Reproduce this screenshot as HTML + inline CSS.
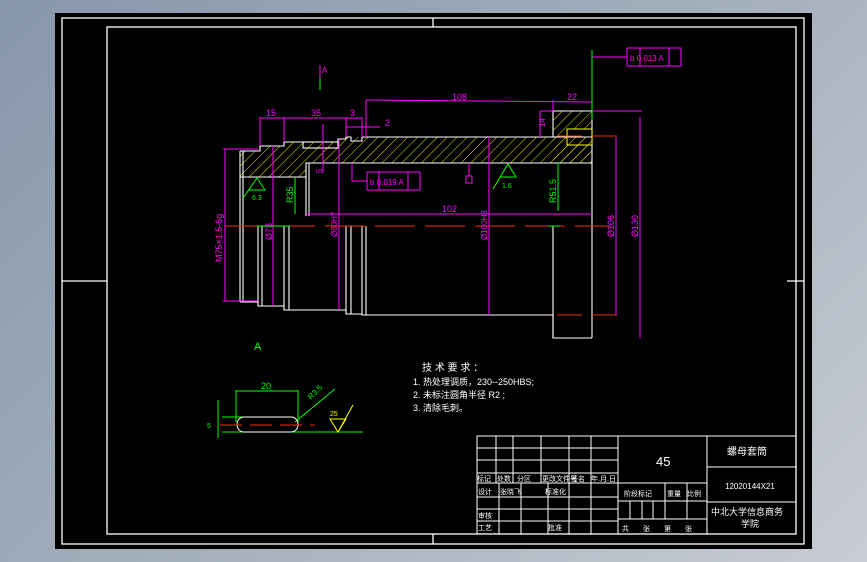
<!DOCTYPE html>
<html><head><meta charset="utf-8"><style>
html,body{margin:0;padding:0;width:867px;height:562px;overflow:hidden;background:linear-gradient(135deg,#8797aa 0%,#a3aebc 50%,#c8ccd4 100%);}
svg{position:absolute;left:0;top:0}
text{font-family:"Liberation Sans","Noto Sans CJK SC",sans-serif}
</style></head><body>
<svg width="867" height="562" viewBox="0 0 867 562" xmlns="http://www.w3.org/2000/svg">
<defs>
<pattern id="h" width="7" height="7" patternUnits="userSpaceOnUse" patternTransform="rotate(45)">
<line x1="0" y1="0" x2="0" y2="7" stroke="#e8e800" stroke-width="1"/>
</pattern>
</defs>
<rect x="55" y="13" width="757" height="536" fill="#000"/>
<g fill="none" stroke="#fff" stroke-width="1.3">
<rect x="62" y="18" width="742" height="526"/>
<rect x="107" y="27" width="689" height="507"/>
<line x1="62" y1="281" x2="107" y2="281"/><line x1="787" y1="281" x2="804" y2="281"/>
<line x1="433" y1="18" x2="433" y2="27"/><line x1="433" y1="534" x2="433" y2="544"/>
</g>
<!-- hatched upper section -->
<path d="M240 151 H260 V146 H284 V142 H338 V139 H346 V137 H592 V163 H306 V177 H240 Z" fill="url(#h)"/>
<path d="M553 111 H592 V129 H567 V145 H592 V163 H553 Z" fill="url(#h)"/>
<g fill="none" stroke="#fff" stroke-width="1.1">
<path d="M240 151 H260 V146 H284 V142 H338 V139 H346 V137 H351 V141 H362 V137 H592"/>
<rect x="303" y="142" width="35" height="6"/>
<path d="M553 111 H592 V338"/>
<line x1="553" y1="111" x2="553" y2="137"/>
<line x1="240" y1="177" x2="306" y2="177"/>
<path d="M306 177 V163 H592"/>
<line x1="240" y1="151" x2="240" y2="302"/>
<line x1="243" y1="151" x2="243" y2="302"/>
<path d="M240 302 H258 V306 H284 V310 H346 V314 H362 V315 H553 V338 H592"/>
<line x1="258" y1="226" x2="258" y2="306"/><line x1="262" y1="226" x2="262" y2="306"/>
<line x1="284" y1="226" x2="284" y2="310"/><line x1="289" y1="226" x2="289" y2="310"/>
<line x1="306" y1="177" x2="306" y2="216"/><line x1="309" y1="163" x2="309" y2="216"/>
<line x1="346" y1="226" x2="346" y2="314"/><line x1="351" y1="226" x2="351" y2="314"/>
<line x1="362" y1="226" x2="362" y2="315"/><line x1="366" y1="226" x2="366" y2="315"/>
<line x1="553" y1="226" x2="553" y2="338"/>
</g>
<rect x="567" y="129" width="25" height="16" fill="none" stroke="#ff0" stroke-width="1"/>
<!-- centerlines -->
<g stroke="#f03000" stroke-width="1" stroke-dasharray="40,10">
<line x1="225" y1="226" x2="610" y2="226"/>
</g>
<line x1="557" y1="136" x2="620" y2="136" stroke="#f03000" stroke-dasharray="25,10"/>
<line x1="557" y1="315" x2="620" y2="315" stroke="#f03000" stroke-dasharray="25,10"/>
<!-- dimensions magenta -->
<g stroke="#f0f" stroke-width="1" fill="none">
<line x1="260" y1="118" x2="362" y2="118"/>
<line x1="260" y1="117" x2="260" y2="146"/><line x1="284" y1="117" x2="284" y2="142"/>
<line x1="346" y1="117" x2="346" y2="137"/><line x1="362" y1="117" x2="362" y2="137"/>
<line x1="346" y1="127" x2="380" y2="127"/>
<line x1="366" y1="100" x2="592" y2="102"/><line x1="366" y1="100" x2="366" y2="137"/>
<line x1="553" y1="100" x2="553" y2="111"/>
<line x1="540" y1="111" x2="553" y2="111"/><line x1="540" y1="111" x2="540" y2="137"/>
<line x1="223" y1="149" x2="258" y2="149"/><line x1="225" y1="149" x2="225" y2="301"/><line x1="223" y1="301" x2="258" y2="301"/>
<line x1="273" y1="146" x2="273" y2="306"/>
<line x1="339" y1="139" x2="339" y2="310"/>
<line x1="323" y1="124" x2="323" y2="173"/>
<line x1="489" y1="137" x2="489" y2="315"/>
<line x1="306" y1="214" x2="592" y2="214"/>
<line x1="616" y1="137" x2="616" y2="315"/>
<line x1="592" y1="111" x2="642" y2="111"/><line x1="640" y1="117" x2="640" y2="338"/>
<line x1="592" y1="57" x2="627" y2="57"/>
<rect x="627" y="48" width="54" height="18"/><line x1="640" y1="48" x2="640" y2="66"/><line x1="669" y1="48" x2="669" y2="66"/>
<path d="M352 163 V181 H367"/>
<rect x="367" y="172" width="53" height="18"/><line x1="379" y1="172" x2="379" y2="190"/><line x1="408" y1="172" x2="408" y2="190"/>
<line x1="469" y1="163" x2="469" y2="176"/><rect x="466" y="176" width="6" height="7"/>
<line x1="320" y1="65" x2="320" y2="78"/>
</g>
<g fill="#f0f" font-size="9">
<text x="266" y="116">15</text><text x="311" y="116">35</text><text x="350" y="116">3</text><text x="385" y="126">2</text>
<text x="452" y="100">108</text><text x="567" y="100">22</text>
<text x="442" y="212">102</text>
<text x="322" y="73" font-size="8">A</text>
<text x="630" y="61" font-size="8">b  0.013  A</text>
<text x="370" y="185" font-size="8">b  0.019  A</text>
<text x="0" y="0" font-size="9" transform="translate(222,262) rotate(-90)">M75×1.5-6g</text>
<text x="0" y="0" transform="translate(272,240) rotate(-90)">Ø78</text>
<text x="0" y="0" font-size="8" transform="translate(337,237) rotate(-90)">Ø80H7</text>
<text x="0" y="0" font-size="8" transform="translate(487,240) rotate(-90)">Ø100H8</text>
<text x="0" y="0" transform="translate(614,237) rotate(-90)">Ø106</text>
<text x="0" y="0" transform="translate(638,237) rotate(-90)">Ø130</text>
<text x="0" y="0" font-size="8" transform="translate(545,127) rotate(-90)">14</text>
<text x="0" y="0" font-size="8" transform="translate(322,173) rotate(-90)">5</text>
</g>
<!-- green -->
<g stroke="#0f0" stroke-width="1" fill="none">
<line x1="592" y1="50" x2="592" y2="120"/>
<path d="M243 198 L257 178 L265 190 H249"/>
<path d="M493 189 L508 164 L516 177 H500"/>
<line x1="295" y1="177" x2="295" y2="214"/>
<line x1="558" y1="163" x2="558" y2="211"/>
<line x1="320" y1="78" x2="320" y2="90"/>
<line x1="257" y1="226" x2="290" y2="226"/><line x1="548" y1="226" x2="560" y2="226"/>
<!-- keyway -->
<line x1="236" y1="390" x2="236" y2="422"/><line x1="298" y1="390" x2="298" y2="422"/>
<line x1="236" y1="391" x2="298" y2="391"/>
<line x1="222" y1="417" x2="243" y2="417"/><line x1="222" y1="432" x2="363" y2="432"/>
<line x1="218" y1="400" x2="218" y2="438"/>
<line x1="295" y1="422" x2="335" y2="389"/>
</g>
<g fill="#0f0" font-size="9">
<text x="252" y="200" font-size="7">6.3</text>
<text x="502" y="188" font-size="7">1.6</text>
<text x="0" y="0" transform="translate(293,203) rotate(-90)">R35</text>
<text x="0" y="0" transform="translate(556,203) rotate(-90)">R51.5</text>
<text x="254" y="350" font-size="11">A</text>
<text x="261" y="389">20</text>
<text x="0" y="0" font-size="8" transform="translate(311,400) rotate(-45)">R3.5</text>
<text x="207" y="428" font-size="7">5</text>
</g>
<rect x="237" y="417" width="61" height="15" rx="7" fill="none" stroke="#fff" stroke-width="1"/>
<line x1="220" y1="425" x2="315" y2="425" stroke="#f03000" stroke-dasharray="22,8"/>
<path d="M330 419 L346 419 L338 432 Z M338 432 L353 405" fill="none" stroke="#ff0"/>
<text x="330" y="416" font-size="7" fill="#ff0">25</text>
<!-- tech req -->
<g fill="#fff" font-size="9">
<text x="422" y="371" font-size="10">技 术 要 求 ：</text>
<text x="413" y="385">1. 热处理调质，230--250HBS;</text>
<text x="413" y="398">2. 未标注圆角半径 R2 ;</text>
<text x="413" y="411">3. 清除毛刺。</text>
</g>
<!-- title block -->
<g stroke="#fff" stroke-width="1" fill="none">
<rect x="477" y="436" width="319" height="98"/>
<line x1="477" y1="448" x2="618" y2="448"/><line x1="477" y1="460" x2="618" y2="460"/>
<line x1="477" y1="473" x2="618" y2="473"/><line x1="477" y1="483" x2="707" y2="483"/>
<line x1="477" y1="497" x2="618" y2="497"/><line x1="477" y1="509" x2="618" y2="509"/><line x1="477" y1="521" x2="618" y2="521"/>
<line x1="496" y1="436" x2="496" y2="483"/><line x1="513" y1="436" x2="513" y2="483"/><line x1="541" y1="436" x2="541" y2="483"/>
<line x1="569" y1="436" x2="569" y2="534"/><line x1="591" y1="436" x2="591" y2="534"/>
<line x1="499" y1="483" x2="499" y2="534"/><line x1="521" y1="483" x2="521" y2="534"/><line x1="548" y1="483" x2="548" y2="534"/>
<line x1="618" y1="436" x2="618" y2="534"/><line x1="707" y1="436" x2="707" y2="534"/>
<line x1="618" y1="501" x2="707" y2="501"/><line x1="618" y1="519" x2="707" y2="519"/>
<line x1="665" y1="483" x2="665" y2="519"/><line x1="687" y1="483" x2="687" y2="519"/>
<line x1="630" y1="501" x2="630" y2="519"/><line x1="642" y1="501" x2="642" y2="519"/><line x1="653" y1="501" x2="653" y2="519"/>
<line x1="707" y1="467" x2="796" y2="467"/><line x1="707" y1="502" x2="796" y2="502"/>
</g>
<g fill="#fff" font-size="7">
<text x="477" y="481">标记</text><text x="497" y="481">处数</text><text x="517" y="481">分区</text><text x="542" y="481">更改文件号</text><text x="571" y="481">签名</text><text x="591" y="481">年.月.日</text>
<text x="478" y="494">设计</text><text x="500" y="494">张晓飞</text><text x="545" y="494">标准化</text>
<text x="478" y="518">审核</text><text x="478" y="530">工艺</text><text x="548" y="530">批准</text>
<text x="624" y="496">阶段标记</text><text x="667" y="496">重量</text><text x="687" y="496">比例</text>
<text x="622" y="531">共　　张　　第　　张</text>
<text x="656" y="466" font-size="13">45</text>
<text x="727" y="455" font-size="10">螺母套筒</text>
<text x="725" y="489" font-size="8">12020144X21</text>
<text x="711" y="515" font-size="9">中北大学信息商务</text>
<text x="741" y="527" font-size="9">学院</text>
</g>
</svg>
</body></html>
